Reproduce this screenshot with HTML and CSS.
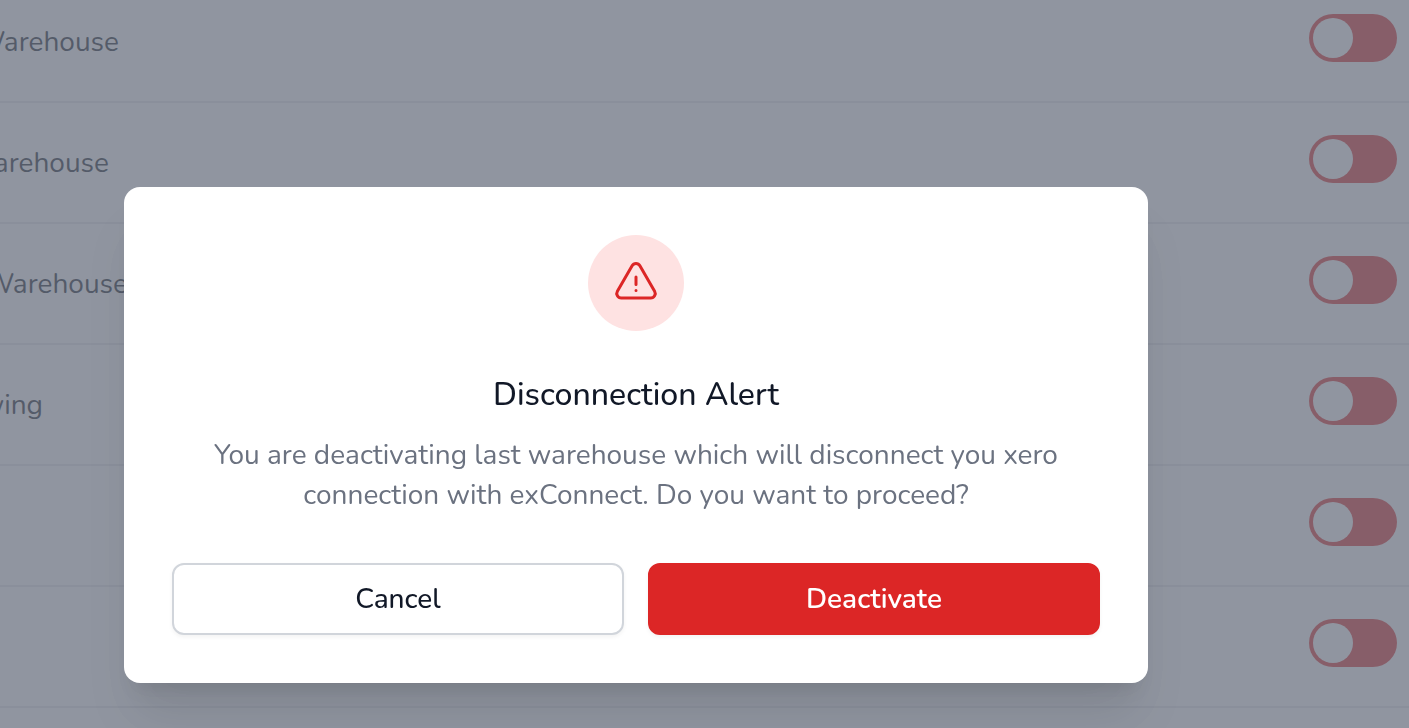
FILE: index.html
```
<!DOCTYPE html>
<html lang="en">
<head>
<meta charset="utf-8">
<meta name="viewport" content="width=device-width, initial-scale=1">
<title>Disconnection Alert</title>
<link rel="stylesheet" href="styles.css">
</head>
<body>
<main class="page">
  <ul class="list">
    <li class="row"><label class="name name-a" for="w1">Warehouse</label><input class="switch" id="w1" type="checkbox" role="switch"></li>
    <li class="row"><label class="name name-b" for="w2">Warehouse</label><input class="switch" id="w2" type="checkbox" role="switch"></li>
    <li class="row"><label class="name name-c" for="w3">Warehouse</label><input class="switch" id="w3" type="checkbox" role="switch"></li>
    <li class="row"><label class="name name-d" for="w4">wing</label><input class="switch" id="w4" type="checkbox" role="switch"></li>
    <li class="row"><input class="switch" type="checkbox" role="switch" aria-label="Warehouse 5"></li>
    <li class="row"><input class="switch" type="checkbox" role="switch" aria-label="Warehouse 6"></li>
    <li class="row"><input class="switch" type="checkbox" role="switch" aria-label="Warehouse 7"></li>
  </ul>
</main>
<div class="overlay">
  <section class="dialog" role="dialog" aria-modal="true" aria-labelledby="title" aria-describedby="message">
    <div class="badge">
      <svg class="icon" viewBox="0 0 24 24" fill="none" stroke="currentColor" stroke-width="1.5" stroke-linecap="round" stroke-linejoin="round" aria-hidden="true">
        <path d="M12 9v3.75m-9.303 3.376c-.866 1.5.217 3.374 1.948 3.374h14.71c1.73 0 2.813-1.874 1.948-3.374L13.949 3.378c-.866-1.5-3.032-1.5-3.898 0L2.697 16.126zM12 15.75h.007v.008H12v-.008z"/>
      </svg>
    </div>
    <h1 class="title" id="title">Disconnection Alert</h1>
    <p class="message" id="message">You are deactivating last warehouse which will disconnect you xero connection with exConnect. Do you want to proceed?</p>
    <div class="actions">
      <button class="button cancel" type="button">Cancel</button>
      <button class="button danger" type="button">Deactivate</button>
    </div>
  </section>
</div>
</body>
</html>
```
FILE: styles.css
```
*, *::before {
  box-sizing: border-box;
}

body {
  margin: 0;
  background: #fff;
  color: #111827;
  font-family: Nunito, Lato, "Open Sans", sans-serif;
  font-size: 28px;
  line-height: 40px;
}

.page {
  height: 100vh;
  overflow: hidden;
}

.list {
  margin: -18px 0 0;
  padding: 0;
  list-style: none;
}

.row {
  display: flex;
  align-items: flex-start;
  min-height: 121px;
  padding: 32px 12px 0 0;
  border-bottom: 2px solid #e5e7eb;
}

.name {
  display: flex;
  justify-content: flex-end;
  padding-top: 8px;
  color: #111827;
  white-space: nowrap;
}

.name-a { width: 119px; }
.name-b { width: 109px; }
.name-c { width: 128px; }
.name-d { width: 43px; }

.switch {
  appearance: none;
  display: flex;
  width: 88px;
  height: 48px;
  margin: 0 0 0 auto;
  padding: 4px;
  border-radius: 24px;
  background: #dc2626;
}

.switch::before {
  content: "";
  width: 40px;
  height: 40px;
  border-radius: 50%;
  background: #fff;
}

.switch:checked {
  justify-content: flex-end;
}

.overlay {
  position: fixed;
  inset: 0;
  padding: 187px 124px 0;
  overflow: hidden;
  background: rgba(107, 114, 128, 0.75);
}

.dialog {
  max-width: 1024px;
  padding: 48px;
  border-radius: 16px;
  background: #fff;
  box-shadow: 0 40px 50px -10px rgba(0, 0, 0, 0.1), 0 16px 20px -12px rgba(0, 0, 0, 0.1);
  text-align: center;
}

.badge {
  display: flex;
  align-items: center;
  justify-content: center;
  width: 96px;
  height: 96px;
  margin: 0 auto;
  border-radius: 50%;
  background: #fee2e2;
  color: #dc2626;
}

.icon {
  width: 48px;
  height: 48px;
}

.title {
  margin: 40px 0 0;
  font-size: 32px;
  font-weight: 500;
  line-height: 48px;
}

.message {
  margin: 16px 0 0;
  color: #6b7280;
}

.actions {
  display: grid;
  grid-template-columns: 1fr 1fr;
  gap: 24px;
  margin-top: 48px;
}

.button {
  padding: 14px 24px;
  border: 2px solid #d1d5db;
  border-radius: 12px;
  background: #fff;
  box-shadow: 0 2px 4px rgba(0, 0, 0, 0.05);
  color: #111827;
  font: inherit;
  font-weight: 500;
}

.danger {
  border-color: #dc2626;
  background: #dc2626;
  color: #fff;
  font-weight: 600;
}
```
